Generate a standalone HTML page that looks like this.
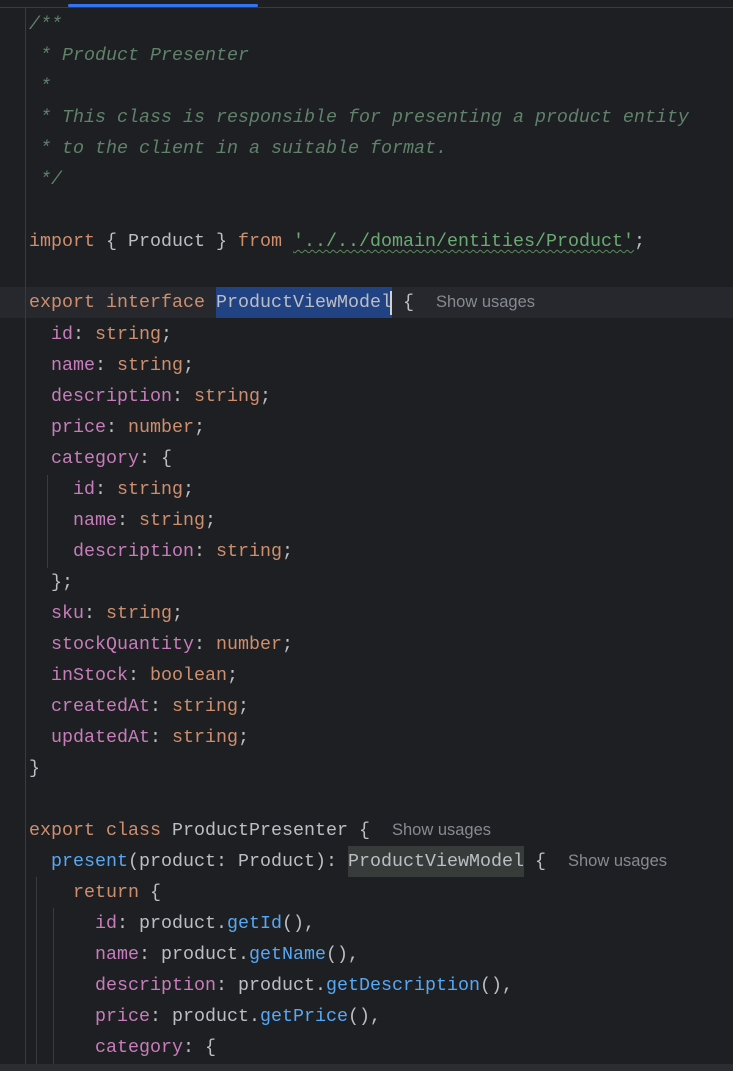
<!DOCTYPE html>
<html><head><meta charset="utf-8"><style>
html,body{margin:0;padding:0;background:#1e1f22;width:733px;height:1071px;overflow:hidden;position:relative}
.top{position:absolute;left:0;top:0;width:733px;height:7px;background:#1e1f22;border-bottom:1px solid #393b40}
.tab{position:absolute;left:68px;top:4px;width:190px;height:3px;background:#3574f0;border-radius:2px}
.gl{position:absolute;width:1px;background:#393b40}
.ln{position:absolute;left:29px;height:31px;line-height:31px;font-family:"Liberation Mono",monospace;font-size:18.33px;color:#bcbec4;white-space:pre}
.c{color:#5f826b;font-style:italic}.k{color:#cf8e6d}.p{color:#c77dbb}.s{color:#6aab73;text-decoration:underline wavy #5c8a5c;text-decoration-thickness:1px;text-underline-offset:3px}.f{color:#56a8f5}
.h{font-family:"Liberation Sans",sans-serif;color:#868a91;font-size:16.5px;font-style:normal}
.sel{background:#214283;display:inline-block;height:31px;vertical-align:top}.hl{background:#373b39;display:inline-block;height:31px;vertical-align:top}
.cur{position:absolute;left:0;top:287px;width:733px;height:31px;background:#26282e}
.caret{position:absolute;left:390px;top:291px;width:2px;height:24px;background:#ced0d6}
.bot{position:absolute;left:0;top:1064px;width:733px;height:7px;background:#2b2d30}
</style></head><body>
<div class="top"></div><div class="tab"></div>
<div class="cur"></div>
<div class="gl" style="left:25px;top:8px;height:1056px"></div>
<div class="gl" style="left:47px;top:475px;height:93px"></div>
<div class="gl" style="left:36px;top:877px;height:187px"></div>
<div class="gl" style="left:53px;top:908px;height:156px"></div>
<div style="position:absolute;left:0;top:1px;width:733px;height:1063px">
<div class="ln c" style="top:8px">/**</div>
<div class="ln c" style="top:39px"> * Product Presenter</div>
<div class="ln c" style="top:70px"> *</div>
<div class="ln c" style="top:101px"> * This class is responsible for presenting a product entity</div>
<div class="ln c" style="top:132px"> * to the client in a suitable format.</div>
<div class="ln c" style="top:163px"> */</div>
<div class="ln" style="top:225px"><span class="k">import</span> { Product } <span class="k">from</span> <span class="s">'../../domain/entities/Product'</span>;</div>
<div class="ln" style="top:286px"><span class="k">export interface</span> <span class="sel">ProductViewModel</span> {  <span class="h">Show usages</span></div>
<div class="ln" style="top:318px">  <span class="p">id</span>: <span class="k">string</span>;</div>
<div class="ln" style="top:349px">  <span class="p">name</span>: <span class="k">string</span>;</div>
<div class="ln" style="top:380px">  <span class="p">description</span>: <span class="k">string</span>;</div>
<div class="ln" style="top:411px">  <span class="p">price</span>: <span class="k">number</span>;</div>
<div class="ln" style="top:442px">  <span class="p">category</span>: {</div>
<div class="ln" style="top:473px">    <span class="p">id</span>: <span class="k">string</span>;</div>
<div class="ln" style="top:504px">    <span class="p">name</span>: <span class="k">string</span>;</div>
<div class="ln" style="top:535px">    <span class="p">description</span>: <span class="k">string</span>;</div>
<div class="ln" style="top:566px">  };</div>
<div class="ln" style="top:597px">  <span class="p">sku</span>: <span class="k">string</span>;</div>
<div class="ln" style="top:628px">  <span class="p">stockQuantity</span>: <span class="k">number</span>;</div>
<div class="ln" style="top:659px">  <span class="p">inStock</span>: <span class="k">boolean</span>;</div>
<div class="ln" style="top:690px">  <span class="p">createdAt</span>: <span class="k">string</span>;</div>
<div class="ln" style="top:721px">  <span class="p">updatedAt</span>: <span class="k">string</span>;</div>
<div class="ln" style="top:752px">}</div>
<div class="ln" style="top:814px"><span class="k">export class</span> ProductPresenter {  <span class="h">Show usages</span></div>
<div class="ln" style="top:845px">  <span class="f">present</span>(product: Product): <span class="hl">ProductViewModel</span> {  <span class="h">Show usages</span></div>
<div class="ln" style="top:876px">    <span class="k">return</span> {</div>
<div class="ln" style="top:907px">      <span class="p">id</span>: product.<span class="f">getId</span>(),</div>
<div class="ln" style="top:938px">      <span class="p">name</span>: product.<span class="f">getName</span>(),</div>
<div class="ln" style="top:969px">      <span class="p">description</span>: product.<span class="f">getDescription</span>(),</div>
<div class="ln" style="top:1000px">      <span class="p">price</span>: product.<span class="f">getPrice</span>(),</div>
<div class="ln" style="top:1031px">      <span class="p">category</span>: {</div>
</div>
<div class="caret"></div>
<div class="bot"></div>
</body></html>
